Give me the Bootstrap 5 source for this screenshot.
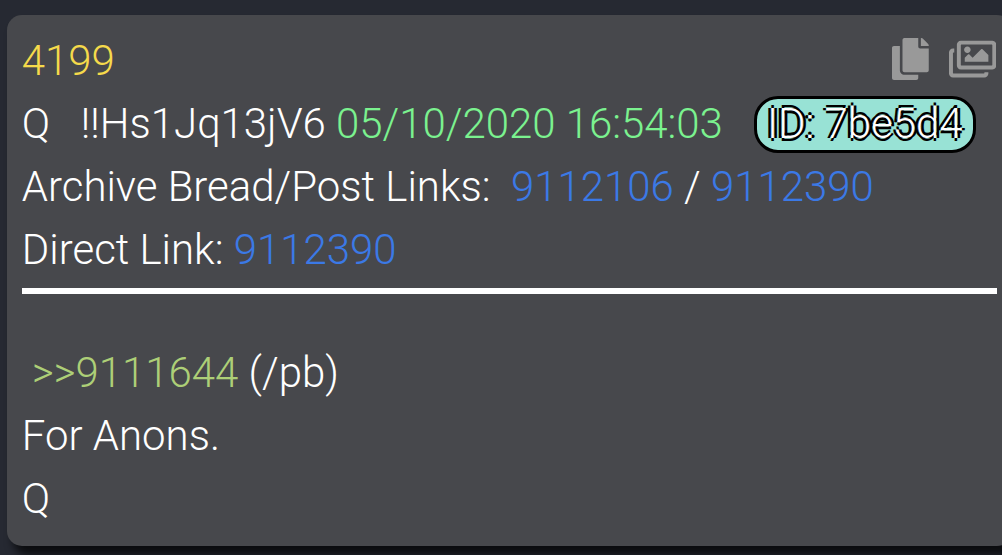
<!DOCTYPE html>
<html lang="en">
<head>
    <meta charset="UTF-8">
    <meta name="viewport" content="width=device-width, initial-scale=1.0">
    <title>Post 4199</title>
    <link href="https://cdn.jsdelivr.net/npm/bootstrap@5.3.2/dist/css/bootstrap.min.css" rel="stylesheet">
    <style>
        body {
            background-color: #262932;
            font-family: Roboto, "Liberation Sans", sans-serif;
            font-size: 41.95px;
            font-weight: 300;
            line-height: 63px;
            color: #fff;
        }
        .page-wrap {
            height: 555px;
            padding: 15px 0 0 7px;
        }
        .post-card {
            width: 1005px;
            height: 531px;
            padding: 14px 15px;
            border: 0;
            border-radius: 15px;
            background-color: #47484c;
            color: #fff;
            box-shadow: 6px 9px 9px 0 rgba(0, 0, 0, 0.7);
        }
        .post-line {
            height: 63px;
            margin-left: -0.2px;
            white-space: pre;
        }
        .post-number { color: #f5da4b; }
        .post-date { color: #7bf28f; }
        .post-card a { color: #3b79e6; }
        .post-quote { color: #adcf77; }
        .post-icons {
            gap: 20px;
            padding: 9px 1px 0 0;
            color: #999;
        }
        .post-icons svg {
            height: 42px;
            fill: currentColor;
        }
        .post-id {
            height: 57px;
            margin: 4px 0 0 31px;
            padding: 0 10px;
            border: 3px solid #000;
            border-radius: 24px;
            background-color: #98e2d5;
            line-height: 49px;
            text-shadow: -3px 0 #000, 0 3px #000, 3px 0 #000, 0 -3px #000;
        }
        .post-rule {
            height: 6px;
            margin: 7px 0 47px;
            border: 0;
            background-color: #fff;
            opacity: 1;
        }
    </style>
</head>
<body>
    <div class="page-wrap overflow-hidden">
        <div class="card post-card">
            <div class="post-line d-flex justify-content-between">
                <span class="post-number">4199</span>
                <div class="post-icons d-flex">
                    <svg viewBox="0 0 448 512"><path d="M320 448v40c0 13.255-10.745 24-24 24H24c-13.255 0-24-10.745-24-24V120c0-13.255 10.745-24 24-24h72v296c0 30.879 25.121 56 56 56h168zm0-344V0H152c-13.255 0-24 10.745-24 24v368c0 13.255 10.745 24 24 24h272c13.255 0 24-10.745 24-24V128H344c-13.2 0-24-10.8-24-24zm120.971-31.029L375.029 7.029A24 24 0 0 0 358.059 0H352v96h96v-6.059a24 24 0 0 0-7.029-16.97z"/></svg>
                    <svg viewBox="0 0 576 512"><path d="M480 416v16c0 26.51-21.49 48-48 48H48c-26.51 0-48-21.49-48-48V176c0-26.51 21.49-48 48-48h16v48H54a6 6 0 0 0-6 6v244a6 6 0 0 0 6 6h372a6 6 0 0 0 6-6v-10h48zm42-336H150a6 6 0 0 0-6 6v244a6 6 0 0 0 6 6h372a6 6 0 0 0 6-6V86a6 6 0 0 0-6-6zm6-48c26.51 0 48 21.49 48 48v256c0 26.51-21.49 48-48 48H144c-26.51 0-48-21.49-48-48V80c0-26.51 21.49-48 48-48h384zM264 144c0 22.091-17.909 40-40 40s-40-17.909-40-40 17.909-40 40-40 40 17.909 40 40zm-72 96l39.515-39.515c4.686-4.686 12.284-4.686 16.971 0L288 240l103.515-103.515c4.686-4.686 12.284-4.686 16.971 0L480 208v80H192v-48z"/></svg>
                </div>
            </div>
            <div class="post-line d-flex"><span>Q   !!Hs1Jq13jV6 </span><span class="post-date">05/10/2020 16:54:03</span><span class="post-id">ID: 7be5d4</span></div>
            <div class="post-line">Archive Bread/Post Links:  <a class="text-decoration-none" href="#">9112106</a> / <a class="text-decoration-none" href="#">9112390</a></div>
            <div class="post-line">Direct Link: <a class="text-decoration-none" href="#">9112390</a></div>
            <hr class="post-rule">
            <div class="post-line"> <span class="post-quote">&gt;&gt;9111644</span> (/pb)</div>
            <div class="post-line">For Anons.</div>
            <div class="post-line">Q</div>
        </div>
    </div>
    <script src="https://cdn.jsdelivr.net/npm/bootstrap@5.3.2/dist/js/bootstrap.bundle.min.js"></script>
</body>
</html>
